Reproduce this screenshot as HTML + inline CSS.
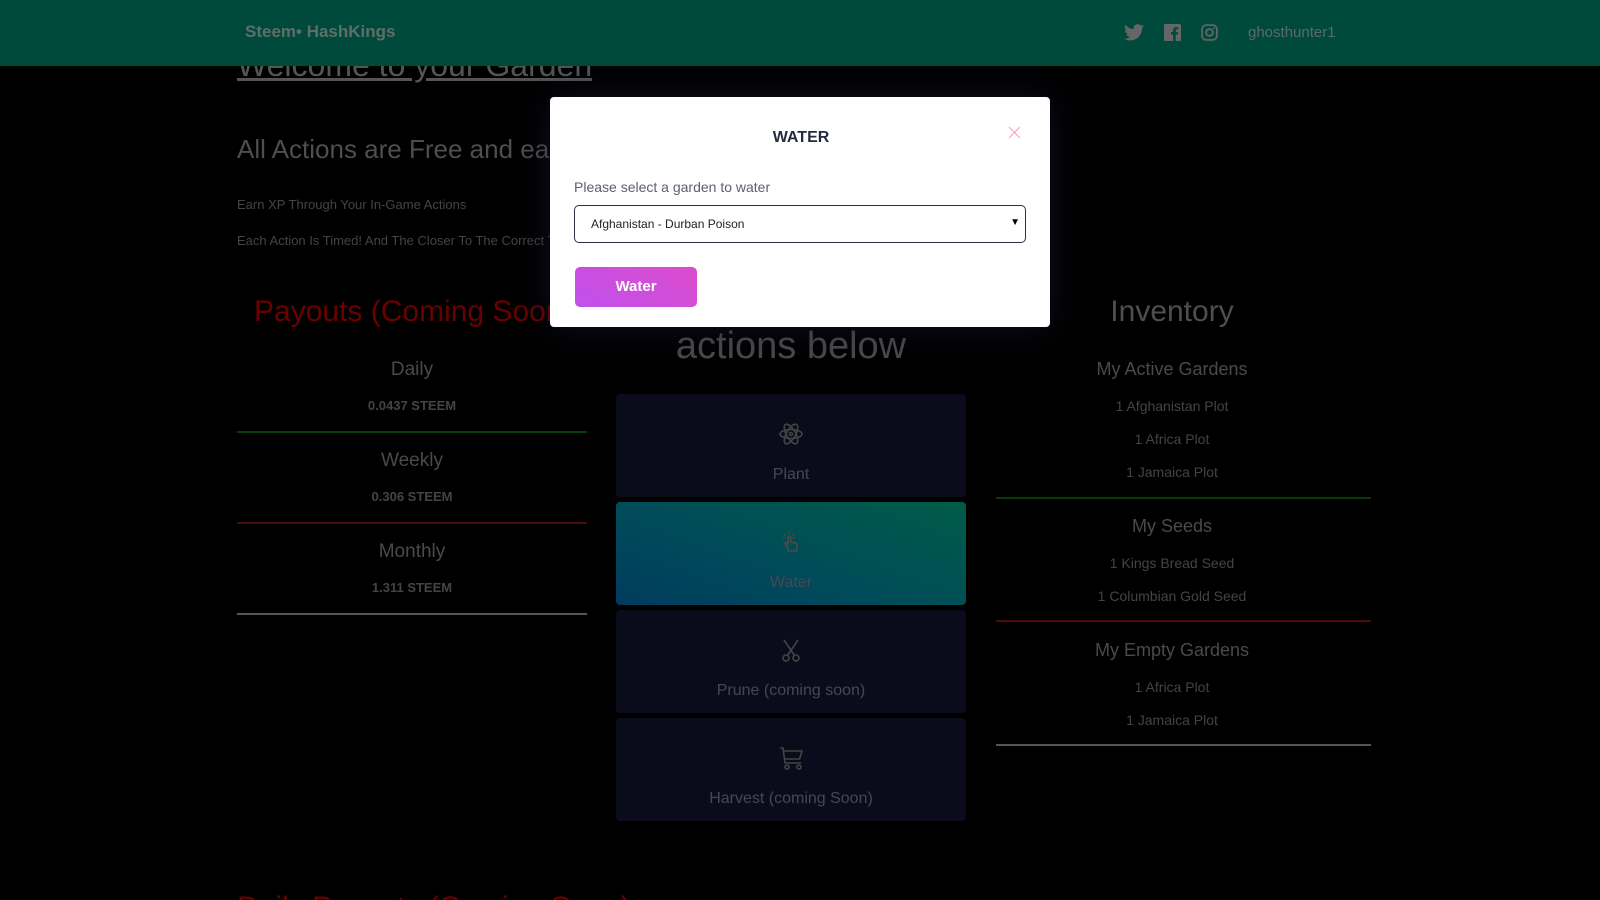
<!DOCTYPE html>
<html><head><meta charset="utf-8"><style>
*{margin:0;padding:0;box-sizing:border-box}
html,body{width:1600px;height:900px;overflow:hidden;background:#000}
body{font-family:"Liberation Sans",sans-serif}
#w{position:relative;width:1600px;height:900px;overflow:hidden}
.a{position:absolute;white-space:nowrap}
.c{transform:translateX(-50%)}
.hdr{position:absolute;left:0;top:0;width:1600px;height:66px;background:#004a3c}
.g{color:#4a4a4a}
.line{position:absolute;height:2px}
.card{position:absolute;left:616px;width:350px;height:103px;border-radius:4px;background:#0b0c1b;color:#474752;text-align:center;font-size:16px}
.card svg{position:absolute;left:163px;top:27px}
.card span{position:absolute;left:0;right:0;top:72px}
</style></head><body><div id="w">
<div class="a g" style="left:237px;top:47px;font-size:32px;text-decoration:underline;color:#555">Welcome to your Garden</div>
<div class="hdr"></div>
<div class="a" style="left:245px;top:22px;font-size:17px;font-weight:bold;color:#5f6e68">Steem• HashKings</div>
<svg class="a" style="left:1124px;top:24px" width="20" height="17" viewBox="0 0 24 20"><path fill="#666" d="M24 2.4a10 10 0 0 1-2.8.8A5 5 0 0 0 23.3.4a10 10 0 0 1-3.1 1.2A4.9 4.9 0 0 0 11.8 6 14 14 0 0 1 1.7.9a4.9 4.9 0 0 0 1.5 6.6 5 5 0 0 1-2.2-.6 4.9 4.9 0 0 0 3.9 4.8 5 5 0 0 1-2.2.1 4.9 4.9 0 0 0 4.6 3.4A9.9 9.9 0 0 1 0 17.3 14 14 0 0 0 7.5 19.5c9 0 14-7.5 14-14v-.6A10 10 0 0 0 24 2.4z"/></svg>
<svg class="a" style="left:1164px;top:24px" width="17" height="17" viewBox="0 0 16 16"><rect width="16" height="16" rx="1.5" fill="#666"/><path fill="#004a3c" d="M11 16V10h2l.3-2.4H11V6.2c0-.7.2-1.1 1.2-1.1h1.2V3a16 16 0 0 0-1.8-.1C9.9 2.9 8.6 3.9 8.6 5.8V7.6H6.6V10h2v6z"/></svg>
<svg class="a" style="left:1201px;top:24px" width="17" height="17" viewBox="0 0 16 16"><rect x="1" y="1" width="14" height="14" rx="4" fill="none" stroke="#666" stroke-width="1.6"/><circle cx="8" cy="8" r="3.2" fill="none" stroke="#666" stroke-width="1.6"/><circle cx="12" cy="4" r=".9" fill="#666"/></svg>
<div class="a" style="left:1248px;top:24px;font-size:15px;color:#5f6866">ghosthunter1</div>

<div class="a g" style="left:237px;top:134px;font-size:26px;color:#4e4e4e">All Actions are Free and earn</div>
<div class="a g" style="left:237px;top:197px;font-size:13px;color:#444">Earn XP Through Your In-Game Actions</div>
<div class="a g" style="left:237px;top:233px;font-size:13px;color:#444">Each Action Is Timed! And The Closer To The Correct Time</div>

<div class="a" style="left:254px;top:295px;font-size:30px;color:#6a0000">Payouts (Coming Soon)</div>
<div class="a g c" style="left:412px;top:359px;font-size:19px">Daily</div>
<div class="a g c" style="left:412px;top:398px;font-size:13px;font-weight:bold;color:#444">0.0437 STEEM</div>
<div class="line" style="left:237px;top:431px;width:350px;background:#053d05"></div>
<div class="a g c" style="left:412px;top:450px;font-size:19px">Weekly</div>
<div class="a g c" style="left:412px;top:489px;font-size:13px;font-weight:bold;color:#444">0.306 STEEM</div>
<div class="line" style="left:237px;top:522px;width:350px;background:#4a0d0d"></div>
<div class="a g c" style="left:412px;top:541px;font-size:19px">Monthly</div>
<div class="a g c" style="left:412px;top:580px;font-size:13px;font-weight:bold;color:#444">1.311 STEEM</div>
<div class="line" style="left:237px;top:613px;width:350px;background:#555"></div>

<div class="a g c" style="left:791px;top:325px;font-size:38px;color:#4a4a4a">actions below</div>
<div class="card" style="top:394px"><svg width="24" height="26" viewBox="0 0 24 26" fill="none" stroke="#444" stroke-width="1.6"><ellipse cx="12" cy="13" rx="11" ry="4.5"/><ellipse cx="12" cy="13" rx="11" ry="4.5" transform="rotate(60 12 13)"/><ellipse cx="12" cy="13" rx="11" ry="4.5" transform="rotate(-60 12 13)"/><circle cx="12" cy="13" r="1.5"/></svg><span>Plant</span></div>
<div class="card" style="top:502px;background:linear-gradient(200deg,#005c48,#004a5a 60%,#003c5e)"><svg width="24" height="26" viewBox="0 0 24 26" fill="none" stroke="#4a4a4a" stroke-width="1.6"><path d="M9 22v-3l-3-4c-.6-1 .6-2 1.5-1.2L9 15V8.5a1.3 1.3 0 0 1 2.6 0V13l5 1.2c1 .3 1.5 1 1.4 2L17.5 22z"/><path d="M10 2v2.5M5 5l1.6 1.6M15.2 5l-1.6 1.6M4 9h2M14 9h2"/></svg><span>Water</span></div>
<div class="card" style="top:610px"><svg width="24" height="26" viewBox="0 0 24 26" fill="none" stroke="#444" stroke-width="1.6"><circle cx="7" cy="21" r="3"/><circle cx="17" cy="21" r="3"/><path d="M8.5 18.5L19 3M15.5 18.5L5 3"/></svg><span>Prune (coming soon)</span></div>
<div class="card" style="top:718px"><svg width="26" height="26" viewBox="0 0 26 26" fill="none" stroke="#444" stroke-width="1.6"><path d="M1 3h3l2 15h16M5 6h18l-2.5 8H6"/><circle cx="8" cy="22" r="2"/><circle cx="20" cy="22" r="2"/></svg><span>Harvest (coming Soon)</span></div>

<div class="a g c" style="left:1172px;top:295px;font-size:30px;color:#4e4e4e">Inventory</div>
<div class="a g c" style="left:1172px;top:359px;font-size:18px">My Active Gardens</div>
<div class="a g c" style="left:1172px;top:398px;font-size:14px;color:#444">1 Afghanistan Plot</div>
<div class="a g c" style="left:1172px;top:431px;font-size:14px;color:#444">1 Africa Plot</div>
<div class="a g c" style="left:1172px;top:464px;font-size:14px;color:#444">1 Jamaica Plot</div>
<div class="line" style="left:996px;top:497px;width:375px;background:#053d05"></div>
<div class="a g c" style="left:1172px;top:516px;font-size:18px">My Seeds</div>
<div class="a g c" style="left:1172px;top:555px;font-size:14px;color:#444">1 Kings Bread Seed</div>
<div class="a g c" style="left:1172px;top:588px;font-size:14px;color:#444">1 Columbian Gold Seed</div>
<div class="line" style="left:996px;top:620px;width:375px;background:#4a0d0d"></div>
<div class="a g c" style="left:1172px;top:640px;font-size:18px">My Empty Gardens</div>
<div class="a g c" style="left:1172px;top:679px;font-size:14px;color:#444">1 Africa Plot</div>
<div class="a g c" style="left:1172px;top:712px;font-size:14px;color:#444">1 Jamaica Plot</div>
<div class="line" style="left:996px;top:744px;width:375px;background:#555"></div>

<div class="a" style="left:237px;top:893px;font-size:30px;line-height:30px;color:#6a0000">Daily Payouts (Coming Soon)</div>

<div class="a" style="left:550px;top:97px;width:500px;height:230px;background:#fff;border-radius:4px;box-shadow:0 0 40px rgba(30,30,60,.5)">
<div class="a c" style="left:251px;top:32px;font-size:16px;font-weight:bold;color:#252b3f">WATER</div>
<svg class="a" style="left:458px;top:29px" width="13" height="13" viewBox="0 0 13 13"><path d="M1 1l11 11M12 1L1 12" stroke="#f7a8bb" stroke-width="1.2"/></svg>
<div class="a" style="left:24px;top:82px;font-size:14px;color:#5a5f70">Please select a garden to water</div>
<div class="a" style="left:24px;top:108px;width:452px;height:38px;border:1px solid #2a3048;border-radius:5px"><span class="a" style="left:16px;top:11px;font-size:12px;color:#222">Afghanistan - Durban Poison</span><span class="a" style="right:5px;top:11px;font-size:10px;color:#000">▼</span></div>
<div class="a" style="left:25px;top:170px;width:122px;height:40px;border-radius:5px;background:linear-gradient(30deg,#c050ec,#dc4ccc);color:#fff;font-size:15px;font-weight:bold;text-align:center;line-height:40px">Water</div>
</div>
</div></body></html>
